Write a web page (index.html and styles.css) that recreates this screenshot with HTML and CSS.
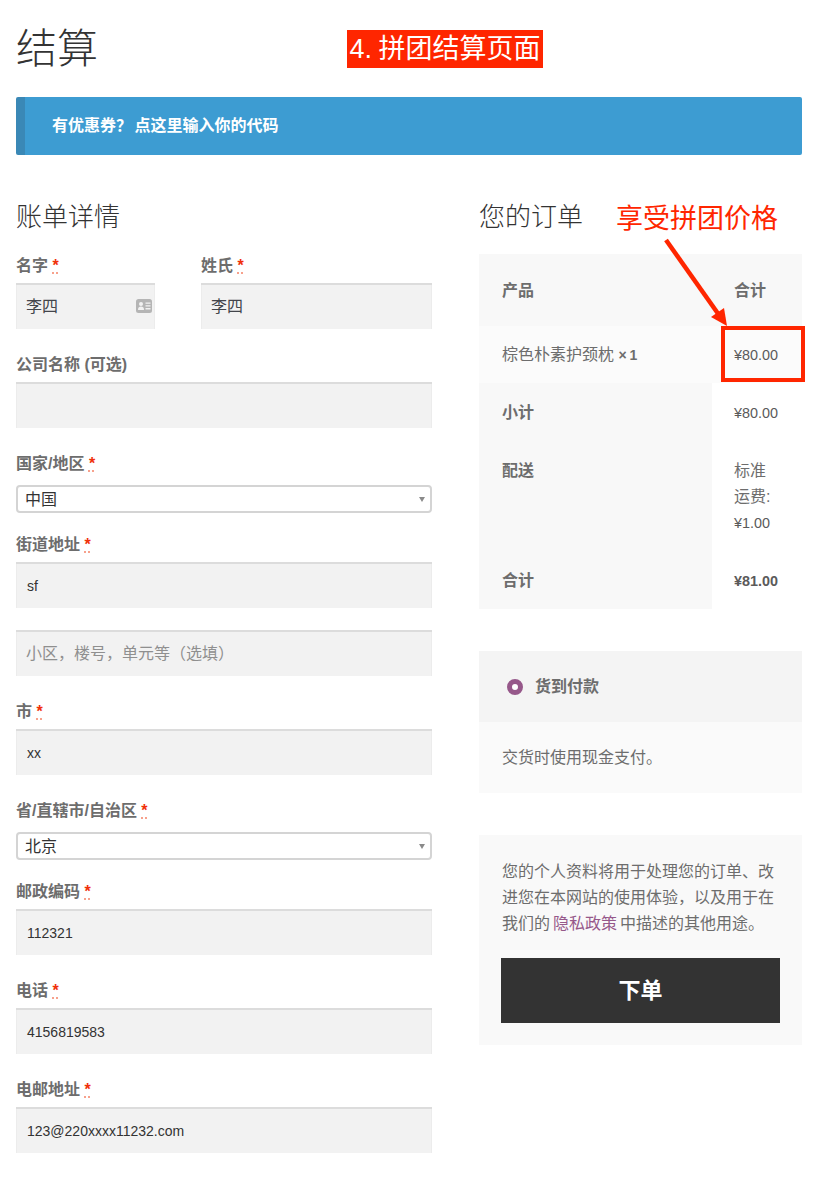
FILE: index.html
```html
<!DOCTYPE html>
<html lang="zh-CN">
<head>
<meta charset="utf-8">
<title>结算</title>
<link rel="stylesheet" href="styles.css">
</head>
<body>
<div class="page">
  <h1 class="title">结算</h1>
  <div class="notice">有优惠券？ 点这里输入你的代码</div>
  <div class="columns">
    <form class="billing">
      <h2 class="heading">账单详情</h2>
      <div class="name-row">
        <div class="field first-name">
          <label class="label">名字 <abbr class="req">*</abbr></label>
          <div class="input-wrap">
            <div class="input cjk">李四</div>
            <svg class="card-icon" width="16" height="14" viewBox="0 0 16 14"><rect width="16" height="14" rx="2.5" fill="#b5b5b5"/><circle cx="5" cy="5" r="2" fill="#f2f2f2"/><path d="M2 11c0-2.4 1.2-3.4 3-3.4s3 1 3 3.4z" fill="#f2f2f2"/><path d="M9.5 3.5h5v1.3h-5zM9.5 6.3h5v1.3h-5zM9.5 9.1h5v1.3h-5z" fill="#f2f2f2"/></svg>
          </div>
        </div>
        <div class="field last-name">
          <label class="label">姓氏 <abbr class="req">*</abbr></label>
          <div class="input cjk">李四</div>
        </div>
      </div>
      <div class="field">
        <label class="label">公司名称 (可选)</label>
        <div class="input"></div>
      </div>
      <div class="field">
        <label class="label label-select">国家/地区 <abbr class="req">*</abbr></label>
        <div class="select">中国</div>
      </div>
      <div class="field after-select">
        <label class="label">街道地址 <abbr class="req">*</abbr></label>
        <div class="input latin">sf</div>
        <div class="input second-line placeholder">小区，楼号，单元等（选填）</div>
      </div>
      <div class="field">
        <label class="label">市 <abbr class="req">*</abbr></label>
        <div class="input latin">xx</div>
      </div>
      <div class="field">
        <label class="label label-select">省/直辖市/自治区 <abbr class="req">*</abbr></label>
        <div class="select">北京</div>
      </div>
      <div class="field after-select">
        <label class="label">邮政编码 <abbr class="req">*</abbr></label>
        <div class="input latin">112321</div>
      </div>
      <div class="field">
        <label class="label">电话 <abbr class="req">*</abbr></label>
        <div class="input latin">4156819583</div>
      </div>
      <div class="field">
        <label class="label">电邮地址 <abbr class="req">*</abbr></label>
        <div class="input latin">123@220xxxx11232.com</div>
      </div>
    </form>
    <div class="order">
      <h2 class="heading">您的订单</h2>
      <table class="order-table">
        <thead>
          <tr><th class="col-name">产品</th><th class="col-total">合计</th></tr>
        </thead>
        <tbody>
          <tr class="item"><td class="col-name">棕色朴素护颈枕 <b class="qty">× 1</b></td><td class="col-total price">¥80.00</td></tr>
        </tbody>
        <tfoot>
          <tr class="subtotal"><th class="col-name">小计</th><td class="col-total price">¥80.00</td></tr>
          <tr class="shipping"><th class="col-name">配送</th><td class="col-total">标准运费: <span class="price">¥1.00</span></td></tr>
          <tr class="total"><th class="col-name">合计</th><td class="col-total price"><b>¥81.00</b></td></tr>
        </tfoot>
      </table>
      <div class="payment">
        <div class="pay-head"><span class="radio"></span><b>货到付款</b></div>
        <div class="pay-body">交货时使用现金支付。</div>
      </div>
      <div class="place">
        <p class="privacy">您的个人资料将用于处理您的订单、改进您在本网站的使用体验，以及用于在我们的 <a class="link" href="#">隐私政策</a> 中描述的其他用途。</p>
        <button class="submit" type="button">下单</button>
      </div>
    </div>
  </div>
  <div class="tag">4. 拼团结算页面</div>
  <div class="callout">享受拼团价格</div>
  <svg class="arrow" width="90" height="100" viewBox="0 0 90 100"><path d="M2 2 L55 77" stroke="#ff2600" stroke-width="4.5" fill="none"/><path d="M63 88 L47 79 L60 70 Z" fill="#ff2600"/></svg>
  <div class="highlight"></div>
</div>
</body>
</html>
```
FILE: styles.css
```css
* { box-sizing: border-box; }
html, body { margin: 0; padding: 0; background: #fff; }
body {
  font-family: "Liberation Sans", "Noto Sans CJK SC", sans-serif;
  font-size: 16px;
  line-height: 26px;
  color: #6d6d6d;
}
.page { position: relative; width: 832px; height: 1180px; padding: 0 30px 0 16px; overflow: hidden; }
.title { margin: 0; padding-top: 24px; height: 97px; font-size: 41px; line-height: 50px; font-weight: 300; color: #333; }
.notice {
  height: 58px; padding-left: 27px; line-height: 57px;
  background: #3d9cd2; border-left: 9px solid #3a88b6; border-radius: 2px;
  color: #fff; font-weight: 700; word-spacing: -2px;
}
.columns { display: flex; justify-content: space-between; padding-top: 44px; }
.billing { width: 416px; }
.order { width: 323px; }
.heading { margin: 0; height: 36px; font-size: 26px; line-height: 36px; font-weight: 300; color: #333; }
.name-row { display: flex; gap: 46px; }
.first-name { width: 139px; }
.last-name { width: 231px; }
.field { margin-bottom: 22px; }
.billing .heading { margin-bottom: 17px; }
.label { display: block; height: 26px; margin-bottom: 5px; line-height: 28px; font-weight: 700; }
.label-select { margin-bottom: 9px; }
.req { color: #f0300a; font-weight: 700; text-decoration: underline dotted #f58a70; text-underline-offset: 2px; }
.after-select { margin-top: -4px; }
.input-wrap { position: relative; }
.input {
  height: 46px; padding: 0 11px; line-height: 48px;
  background: #f2f2f2; box-shadow: inset 0 2px 0 #dcdcdc, inset 1px 0 0 #ececec, inset -1px 0 0 #ececec;
  color: #43454b;
}
.cjk { padding-left: 10px; }
.latin { font-size: 14px; color: #333; }
.placeholder { padding-left: 10px; color: #8f8f8f; }
.second-line { margin-top: 22px; }
.card-icon { position: absolute; right: 3px; top: 16px; }
.select {
  position: relative; height: 28px; padding-left: 7px; line-height: 25px;
  background: #fff; border: 2px solid #d4d4d4; border-radius: 4px; color: #333;
}
.select::after {
  content: ""; position: absolute; right: 5px; top: 10px;
  border-left: 3.5px solid transparent; border-right: 3.5px solid transparent; border-top: 5px solid #8a8a8a;
}
.order-table { width: 323px; margin-top: 19px; border-collapse: collapse; table-layout: fixed; }
.order-table th, .order-table td { padding: 0 0 0 23px; text-align: left; font-weight: 400; vertical-align: top; }
.order-table th { font-weight: 700; }
.col-name { width: 233px; }
.order-table .col-total { padding-left: 22px; }
thead th { height: 72px; padding-top: 2px !important; background: #f8f8f8; vertical-align: middle !important; }
.item td { height: 57px; background: #fbfbfb; vertical-align: middle !important; }
.qty { font-size: 14px; font-weight: 700; word-spacing: -1px; }
tfoot th { background: #f8f8f8; }
tfoot td { background: #fff; }
.subtotal th, .subtotal td { height: 58px; padding-top: 17px !important; }
.shipping th, .shipping td { height: 110px; padding-top: 17px !important; padding-right: 28px !important; }
.total th, .total td { height: 58px; padding-top: 17px !important; }
.price { font-size: 14.4px; color: #5a5a5a; }
.payment { margin-top: 42px; }
.pay-head { display: flex; align-items: center; gap: 12px; height: 71px; padding-left: 28px; background: #f4f4f4; }
.radio { width: 16px; height: 16px; border-radius: 50%; border: 5px solid #96588a; background: #fff; }
.pay-body { height: 71px; padding-left: 23px; line-height: 72px; background: #fafafa; }
.place { margin-top: 42px; height: 210px; padding: 24px 22px 0 23px; background: #f9f9f9; }
.privacy { margin: 0 0 21px; word-spacing: -1.5px; }
.link { color: #96588a; text-decoration: none; }
.submit {
  display: block; width: 279px; height: 65px; margin-left: -1px; padding: 0;
  background: #333; border: 0; color: #fff; font: 700 22px/65px "Liberation Sans", "Noto Sans CJK SC", sans-serif;
}
.tag {
  position: absolute; left: 347px; top: 30px; width: 196px; height: 38px;
  background: #ff2600; color: #fff; font-size: 27px; line-height: 38px; text-align: center; white-space: nowrap; word-spacing: -1px;
}
.callout { position: absolute; left: 616px; top: 200px; color: #ff2600; font-size: 27px; line-height: 38px; white-space: nowrap; }
.arrow { position: absolute; left: 664px; top: 238px; }
.highlight { position: absolute; left: 721px; top: 326px; width: 84px; height: 56px; border: 4px solid #ff2600; }
```
